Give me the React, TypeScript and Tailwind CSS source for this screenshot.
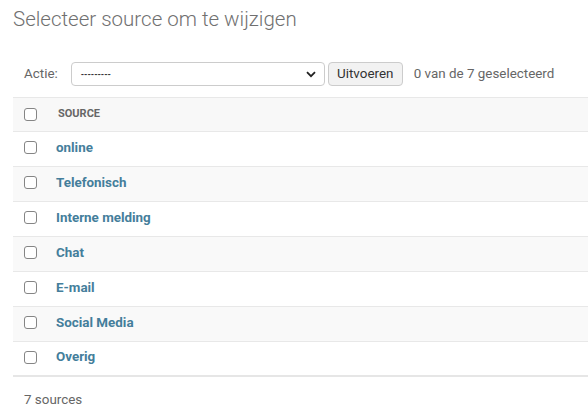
import React from "react";

const rows = ["online", "Telefonisch", "Interne melding", "Chat", "E-mail", "Social Media", "Overig"];

function Box() {
  return <span className="block w-[13px] h-[13px] border border-[#858585] rounded-[3px] bg-white" />;
}

export default function App() {
  return (
    <div className="w-[588px] h-[419px] bg-white overflow-hidden text-[#333]" style={{ fontFamily: "Roboto, 'Liberation Sans', sans-serif" }}>
      <div className="pl-[13px]">
        <h1 className="pt-[6px] text-[20.5px] leading-[26px] font-light text-[#707070]">Selecteer source om te wijzigen</h1>
        <div className="mt-[30px] flex items-center h-[24px] pl-[11px] text-[13.4px] text-[#666]">
          <span className="mr-[13px]">Actie:</span>
          <div className="relative w-[254px] h-[24px] border border-[#ccc] rounded-[4px] bg-white flex items-center pl-[9px]">
            <span className="text-[#333] text-[8.5px] font-bold">---------</span>
            <svg className="absolute right-[8px] top-[8px]" width="10" height="7" viewBox="0 0 10 7">
              <path d="M1 1.2 L5 5.2 L9 1.2" fill="none" stroke="#222" strokeWidth="1.8" />
            </svg>
          </div>
          <button className="ml-[3px] h-[24px] w-[75px] border border-[#ccc] rounded-[4px] bg-[#f2f2f2] text-[#333] text-[13.4px]">Uitvoeren</button>
          <span className="ml-[11px] text-[#666]">0 van de 7 geselecteerd</span>
        </div>
        <div className="mt-[11px]">
          <div className="h-[35px] bg-[#f8f8f8] border-t border-b border-[#e8e8e8] flex items-center">
            <div className="pl-[11px] w-[45px]"><Box /></div>
            <span className="text-[11px] font-bold text-[#666] uppercase">Source</span>
          </div>
          {rows.map((r, i) => (
            <div key={r} className={`h-[35px] flex items-center border-b ${i === rows.length - 1 ? "border-b-2 border-[#e6e6e6]" : "border-[#e8e8e8]"} ${i % 2 === 1 ? "bg-[#f9f9f9]" : "bg-white"}`}>
              <div className="pl-[11px] w-[43px] mb-[3px]"><Box /></div>
              <span className="text-[13.4px] font-bold text-[#447e9b] mb-[2px]">{r}</span>
            </div>
          ))}
          <div className="pl-[11px] pt-[13px] text-[13.4px] text-[#666]">7 sources</div>
        </div>
      </div>
    </div>
  );
}
